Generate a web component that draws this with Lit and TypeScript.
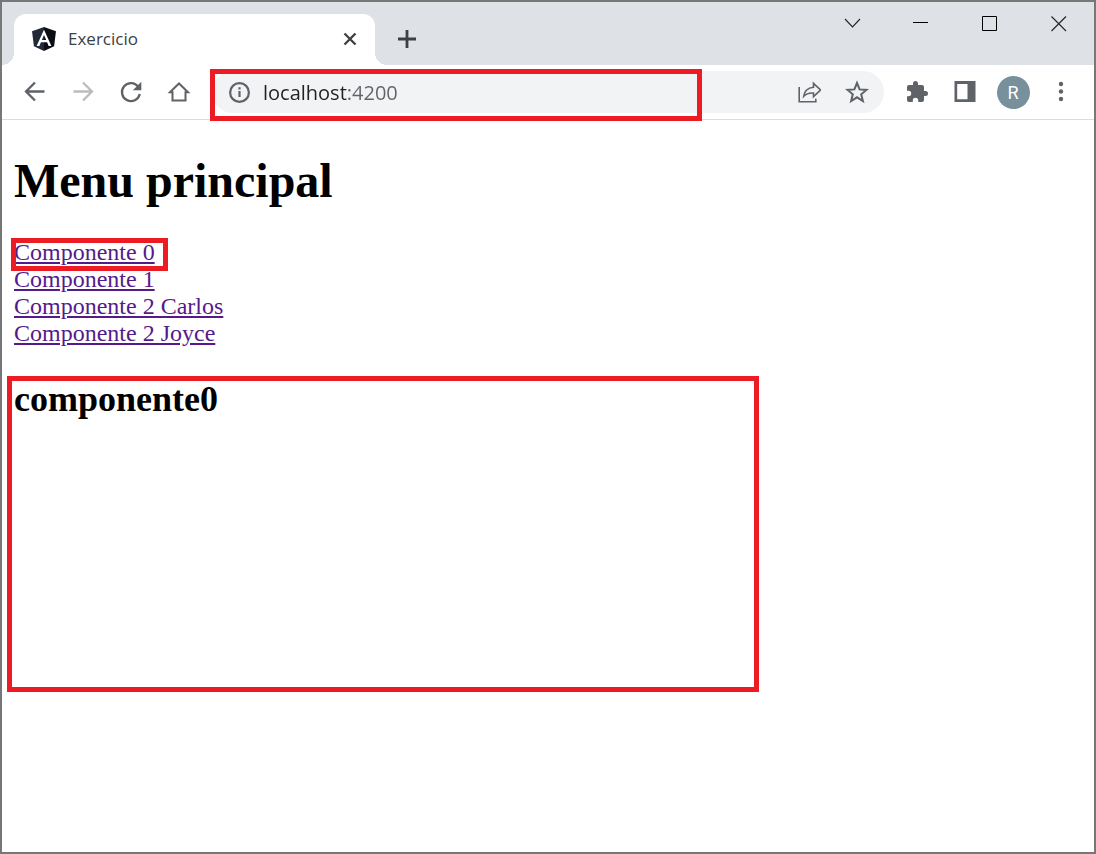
import { LitElement, html, css, svg } from "lit";
import { customElement, property, state } from "lit/decorators.js";

const icons = {
  back: svg`<path d="M21.500 11.500H3.500M12 2.500l-9 9 9 9" fill="none" stroke="currentColor" stroke-width="2.300"/>`,
  forward: svg`<path d="M2.500 11.500H20.500M12 2.500l9 9-9 9" fill="none" stroke="currentColor" stroke-width="2.300"/>`,
  reload: svg`<path d="M19.300 6.800A9 9 0 1 0 20.800 14" fill="none" stroke="currentColor" stroke-width="2.300"/><path d="M22.300 1.700v8.500h-8.500z" fill="currentColor"/>`,
  home: svg`<path d="M3 12.200L12 3.500l9 8.700H18.500v8.300H5.500v-8.300z" fill="none" stroke="currentColor" stroke-width="2"/>`,
  info: svg`<circle cx="12.500" cy="12.500" r="9.400" fill="none" stroke="currentColor" stroke-width="2.200"/><path d="M11.400 11h2.200v6h-2.200zM11.400 7.200h2.200v2.200h-2.200z" fill="currentColor"/>`,
  share: svg`<path d="M2.200 7v14.800h16.600v-3" fill="none" stroke="currentColor" stroke-width="1.600"/><path d="M16.500 3.300l7 6.700-7 6.700v-3.700c-4.500-.3-7.600.8-9.800 3.300.6-5 4-8.400 9.800-9z" fill="none" stroke="currentColor" stroke-width="1.600"/>`,
  star: svg`<path d="M12 3l2.600 6.400 6.900.5-5.300 4.400 1.700 6.700-5.900-3.700L6.100 21l1.700-6.700-5.300-4.400 6.900-.5z" fill="none" stroke="currentColor" stroke-width="2"/>`,
  puzzle: svg`<path d="M20.500 11H19V7a2 2 0 0 0-2-2h-4V3.500a2.500 2.500 0 0 0-5 0V5H4a2 2 0 0 0-2 2v3.800h1.500a2.700 2.700 0 0 1 0 5.400H2V20c0 1.100.9 2 2 2h3.800v-1.500a2.700 2.700 0 0 1 5.400 0V22H17a2 2 0 0 0 2-2v-4h1.500a2.500 2.500 0 0 0 0-5z" fill="currentColor"/>`,
  panel: svg`<path fill-rule="evenodd" d="M1.500 1h21v21h-21zM4.200 4v15.200h10.300V4z" fill="currentColor"/>`,
  menu: svg`<circle cx="12" cy="4" r="2.200" fill="currentColor"/><circle cx="12" cy="11.500" r="2.200" fill="currentColor"/><circle cx="12" cy="19" r="2.200" fill="currentColor"/>`,
  close: svg`<path d="M6.500 6.500l11 11M17.500 6.500l-11 11" fill="none" stroke="currentColor" stroke-width="2.300"/>`,
  plus: svg`<path d="M12 3v18M3 12h18" fill="none" stroke="currentColor" stroke-width="2.800"/>`,
  chevron: svg`<path d="M5 8l7.500 8 7.500-8" fill="none" stroke="#222" stroke-width="1.100"/>`,
  minimize: svg`<path d="M4 11.500h15" stroke="#000" fill="none"/>`,
  maximize: svg`<path d="M4.500 5.500h14v14h-14z" stroke="#000" fill="none"/>`,
  exit: svg`<path d="M4.500 5.500l14.500 14.500M19 5.500l-14.500 14.500" stroke="#222" stroke-width="1.100" fill="none"/>`,
  angular: svg`<path d="M12 0L0 4.200l1.900 15L12 24z" fill="#232938"/><path d="M12 0l12 4.200-1.900 15L12 24z" fill="#0b0d14"/><path fill-rule="evenodd" d="M12 2.700L4.600 19h2.800l1.500-3.700h6.200l1.500 3.700h2.800zM12 8l2.200 5.100H9.800z" fill="#fff"/>`,
};

type IconName = keyof typeof icons;

@customElement("ui-icon")
export class UiIcon extends LitElement {
  @property() name: IconName = "info";

  static styles = css`
    :host {
      display: block;
      width: 24px;
      height: 24px;
      flex: none;
    }
    .glyph {
      display: block;
      width: 100%;
      height: 100%;
    }
  `;

  render() {
    return html`<svg class="glyph" viewBox="0 0 24 24" aria-hidden="true">${icons[this.name]}</svg>`;
  }
}

const control = css`
  button {
    display: flex;
    align-items: center;
    justify-content: center;
    flex: none;
    padding: 0;
    border: 0;
    background: none;
    color: inherit;
    font: inherit;
  }
`;

@customElement("tab-strip")
export class TabStrip extends LitElement {
  static styles = [
    control,
    css`
      :host {
        display: flex;
        align-items: flex-start;
        padding: 0 1px 0 12px;
        background: #dee1e6;
        color: #3c4043;
        font-family: "Open Sans", "Noto Sans", sans-serif;
      }
      .tab {
        position: relative;
        display: flex;
        align-items: center;
        gap: 12px;
        flex: 0 1 361px;
        min-width: 0;
        height: 51px;
        margin-top: 12px;
        padding: 0 13px 2px 18px;
        box-sizing: border-box;
        border-radius: 12px 12px 0 0;
        background: #fff;
      }
      .tab::before,
      .tab::after {
        content: "";
        position: absolute;
        bottom: 0;
        width: 12px;
        height: 12px;
      }
      .tab::before {
        right: 100%;
        background: radial-gradient(circle at 0 0, transparent 12px, #fff 12px);
      }
      .tab::after {
        left: 100%;
        background: radial-gradient(circle at 100% 0, transparent 12px, #fff 12px);
      }
      .title {
        flex: 1;
        overflow: hidden;
        white-space: nowrap;
        font-size: 17px;
        line-height: 24px;
      }
      .new {
        width: 42px;
        height: 49px;
        margin: 12px 0 0 11px;
      }
      .window {
        display: flex;
        margin-left: auto;
      }
      .window button {
        width: 69px;
        height: 42px;
      }
    `,
  ];

  render() {
    return html`
      <div class="tab">
        <ui-icon name="angular"></ui-icon>
        <span class="title">Exercicio</span>
        <button aria-label="Fechar guia"><ui-icon name="close"></ui-icon></button>
      </div>
      <button class="new" aria-label="Nova guia"><ui-icon name="plus"></ui-icon></button>
      <div class="window">
        <button aria-label="Pesquisar guias"><ui-icon name="chevron"></ui-icon></button>
        <button aria-label="Minimizar"><ui-icon name="minimize"></ui-icon></button>
        <button aria-label="Maximizar"><ui-icon name="maximize"></ui-icon></button>
        <button aria-label="Fechar"><ui-icon name="exit"></ui-icon></button>
      </div>
    `;
  }
}

const highlight = css`
  .highlight {
    position: absolute;
    box-sizing: border-box;
    border: 5px solid #ed1c24;
    pointer-events: none;
  }
`;

@customElement("browser-toolbar")
export class BrowserToolbar extends LitElement {
  static styles = [
    control,
    highlight,
    css`
      :host {
        display: flex;
        align-items: center;
        gap: 6px;
        height: 54px;
        padding: 0 12px;
        border-bottom: 1px solid #dadce0;
        background: #fff;
        color: #5f6368;
        font-family: "Open Sans", "Noto Sans", sans-serif;
      }
      button {
        width: 42px;
        height: 42px;
      }
      .disabled {
        color: #babcbe;
      }
      .address {
        position: relative;
        display: flex;
        align-items: center;
        gap: 6px;
        flex: 1;
        min-width: 0;
        height: 42px;
        margin: 0 6px;
        padding: 0 6px 0 15px;
        border-radius: 21px;
        background: #f1f3f4;
      }
      .url {
        flex: 1;
        min-width: 0;
        height: 42px;
        margin-left: 6px;
        padding: 0;
        border: 0;
        outline: 0;
        color: transparent;
        font-family: inherit;
        font-size: 20px;
        background: linear-gradient(90deg, #202124 84px, #5f6368 84px);
        -webkit-background-clip: text;
        background-clip: text;
      }
      .highlight {
        top: -2px;
        left: -2px;
        width: 492px;
        height: 52px;
      }
      .avatar {
        display: flex;
        align-items: center;
        justify-content: center;
        width: 33px;
        height: 33px;
        border-radius: 50%;
        background: #78909c;
        color: #fff;
        font-family: Roboto, sans-serif;
        font-size: 18px;
      }
    `,
  ];

  render() {
    return html`
      <button aria-label="Voltar"><ui-icon name="back"></ui-icon></button>
      <button class="disabled" aria-label="Avançar"><ui-icon name="forward"></ui-icon></button>
      <button aria-label="Recarregar"><ui-icon name="reload"></ui-icon></button>
      <button aria-label="Página inicial"><ui-icon name="home"></ui-icon></button>
      <div class="address">
        <ui-icon name="info"></ui-icon>
        <input class="url" type="text" aria-label="Endereço" .value=${"localhost:4200"} spellcheck="false" />
        <button aria-label="Compartilhar"><ui-icon name="share"></ui-icon></button>
        <button aria-label="Favoritar"><ui-icon name="star"></ui-icon></button>
        <div class="highlight"></div>
      </div>
      <button aria-label="Extensões"><ui-icon name="puzzle"></ui-icon></button>
      <button aria-label="Painel lateral"><ui-icon name="panel"></ui-icon></button>
      <button aria-label="Perfil"><span class="avatar">R</span></button>
      <button aria-label="Menu"><ui-icon name="menu"></ui-icon></button>
    `;
  }
}

@customElement("main-menu")
export class MainMenu extends LitElement {
  @state() private links = ["Componente 0", "Componente 1", "Componente 2 Carlos", "Componente 2 Joyce"];

  static styles = [
    highlight,
    css`
      :host {
        display: block;
        padding: 32px 12px;
        color: #000;
        font-family: "Liberation Serif", "Times New Roman", serif;
        font-size: 24px;
        line-height: 27px;
      }
      .title {
        margin: 0 0 30px;
        font-size: 48px;
        line-height: 57px;
      }
      .links {
        display: flex;
        flex-direction: column;
        align-items: flex-start;
      }
      .entry {
        position: relative;
      }
      .link {
        color: #551a8b;
      }
      .entry .highlight {
        inset: -1px -13px -5px -3px;
      }
      .outlet {
        position: relative;
        margin-top: 30px;
      }
      .outlet .highlight {
        top: -1px;
        left: -7px;
        width: 752px;
        height: 316px;
      }
      .heading {
        margin: 0;
        font-size: 36px;
        line-height: 44px;
      }
    `,
  ];

  render() {
    return html`
      <h1 class="title">Menu principal</h1>
      <nav class="links">
        ${this.links.map(
          (label, i) => html`<div class="entry">
            <a class="link" href="#">${label}</a>${i === 0 ? html`<div class="highlight"></div>` : null}
          </div>`
        )}
      </nav>
      <section class="outlet">
        <h2 class="heading">componente0</h2>
        <div class="highlight"></div>
      </section>
    `;
  }
}

@customElement("app-root")
export class AppRoot extends LitElement {
  static styles = css`
    :host {
      display: flex;
      flex-direction: column;
      min-height: 100vh;
      box-sizing: border-box;
      border: 2px solid #777;
      background: #fff;
    }
  `;

  render() {
    return html`
      <tab-strip></tab-strip>
      <browser-toolbar></browser-toolbar>
      <main-menu></main-menu>
    `;
  }
}
